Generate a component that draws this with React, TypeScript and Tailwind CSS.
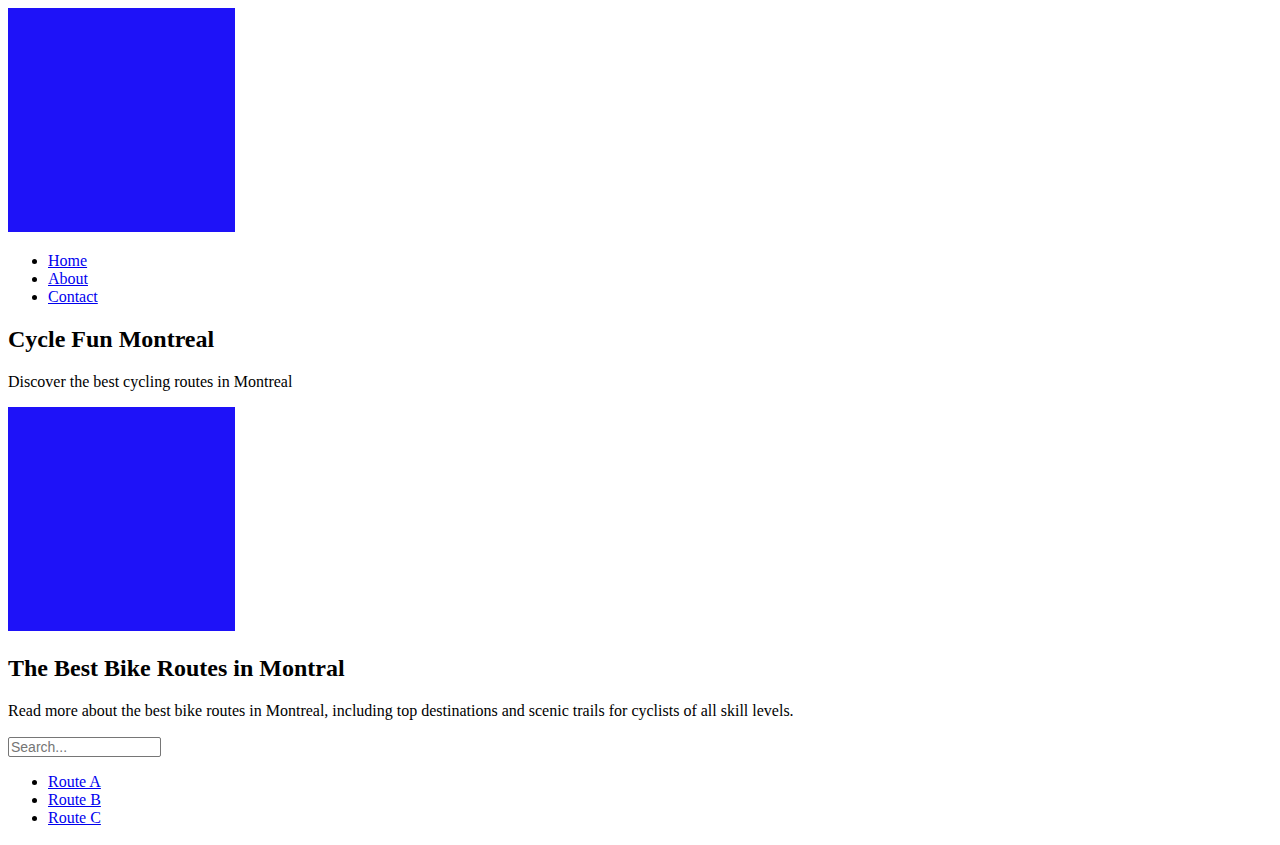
import React from 'react';

const navLinks = ["Home", "About", "Contact"];
const routes = ["Route A", "Route B", "Route C"];

const BlueBox = () => (
  <div className="pb-[4px]">
    <div className="w-[227px] h-[224px] bg-[#1e12f8]" />
  </div>
);

const LinkList = ({ items }: { items: string[] }) => (
  <ul className="list-disc pl-10 my-4">
    {items.map(item => (
      <li key={item}>
        <a href="#" className="text-[#0000ee] underline">{item}</a>
      </li>
    ))}
  </ul>
);

const App = () => {
  return (
    <div className="m-2 font-['Liberation_Serif',serif] text-[16px] leading-[normal] text-black bg-white">
      <header>
        <BlueBox />
        <nav>
          <LinkList items={navLinks} />
        </nav>
        <h2 className="text-[24px] font-bold my-[19.92px]">Cycle Fun Montreal</h2>
        <p className="my-4">Discover the best cycling routes in Montreal</p>
      </header>

      <main>
        <BlueBox />
        <h2 className="text-[24px] font-bold my-[19.92px]">The Best Bike Routes in Montral</h2>
        <p className="my-4">
          Read more about the best bike routes in Montreal, including top destinations and scenic trails for cyclists of all skill levels.
        </p>
        <input
          type="text"
          placeholder="Search..."
          className="block mt-[17px] w-[153px] h-[20px] px-[2px] py-0 border border-[#767676] rounded-[2px] font-['Liberation_Sans',sans-serif] text-[14px] placeholder:text-[#757575]"
        />
        <LinkList items={routes} />
      </main>
    </div>
  );
};

export default App;
